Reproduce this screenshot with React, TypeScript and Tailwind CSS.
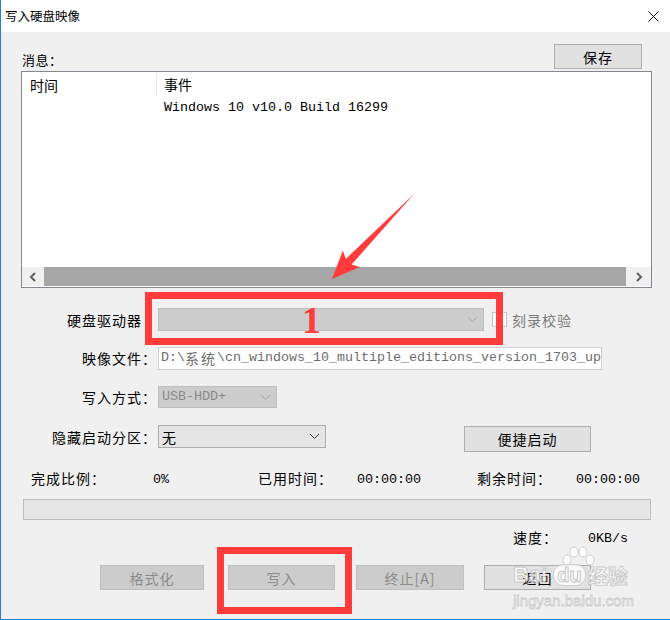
import React from 'react';

const cjk = "font-['Noto_Sans_CJK_SC',sans-serif]";
const mono = "font-['Liberation_Mono','Noto_Sans_CJK_SC',monospace]";

const Chevron: React.FC<{ color: string }> = ({ color }) => (
  <svg width="11" height="7" viewBox="0 0 11 7">
    <path d="M1 1 L5.5 5.5 L10 1" fill="none" stroke={color} strokeWidth="1" />
  </svg>
);

const Btn: React.FC<{ label: string; w: string; disabled?: boolean; className?: string }> = ({
  label,
  w,
  disabled,
  className = '',
}) => (
  <div
    className={`${w} h-[25px] flex items-center justify-center border text-[14px] tracking-[1px] leading-none ${
      disabled ? 'bg-[#cccccc] border-[#bfbfbf] text-[#8a8a8a]' : 'bg-[#e1e1e1] border-[#adadad] text-black'
    } ${className}`}
  >
    {label}
  </div>
);

const App: React.FC = () => {
  return (
    <div className={`relative w-[670px] h-[620px] overflow-hidden bg-[#f0f0f0] border-l border-b border-[#1883d7] ${cjk} text-black`}>
      {/* title bar */}
      <div className="h-[32px] bg-white flex items-center justify-between pl-[4px] pr-[11px]">
        <span className="text-[12.5px] leading-none">写入硬盘映像</span>
        <svg width="11" height="11" viewBox="0 0 11 11">
          <path d="M0.5 0.5 L10.5 10.5 M10.5 0.5 L0.5 10.5" stroke="#111" strokeWidth="1" />
        </svg>
      </div>

      {/* messages header */}
      <div className="mt-[13px] flex items-end justify-between pl-[21px] pr-[28px] h-[24px]">
        <span className="text-[13px] leading-[14px] mb-[2px] tracking-[0.5px]">消息：</span>
        <Btn label="保存" w="w-[88px]" className="h-[24px]" />
      </div>

      {/* message list */}
      <div className="mt-[2px] ml-[20px] w-[631px] h-[217px] border border-[#828790] bg-white flex flex-col">
        <div className="h-[24px] flex text-[14px] leading-none">
          <div className="w-[135px] h-[23px] mt-[1px] pl-[8px] flex items-center border-r border-[#e5e5e5]">时间</div>
          <div className="pl-[7px] flex items-center">事件</div>
        </div>
        <div className={`h-[24px] pl-[142px] flex items-center text-[13.33px] leading-none ${mono}`}>
          Windows 10 v10.0 Build 16299
        </div>
        <div className="flex-1" />
        <div className="h-[19px] mb-[1px] flex">
          <div className="w-[22px] bg-[#f0f0f0] flex items-center justify-center">
            <svg width="8" height="10" viewBox="0 0 8 10">
              <path d="M6 1 L2 5 L6 9" fill="none" stroke="#606060" strokeWidth="2" />
            </svg>
          </div>
          <div className="flex-1 bg-[#a6a6a6]" />
          <div className="w-[25px] bg-[#f0f0f0] flex items-center justify-center">
            <svg width="8" height="10" viewBox="0 0 8 10">
              <path d="M2 1 L6 5 L2 9" fill="none" stroke="#606060" strokeWidth="2" />
            </svg>
          </div>
        </div>
      </div>

      {/* drive row */}
      <div className="mt-[20px] h-[23px] flex items-center text-[14px] tracking-[1px] leading-none">
        <div className="w-[157px] pr-[16px] text-right">硬盘驱动器</div>
        <div className="w-[326px] h-[23px] bg-[#cccccc] border border-[#bfbfbf] flex items-center justify-end pr-[5px]">
          <Chevron color="#a8a8a8" />
        </div>
        <div className="ml-[8px] w-[15px] h-[15px] bg-white border border-[#c4c4c4]" />
        <span className="ml-[5px] text-[#7a7a7a]">刻录校验</span>
      </div>

      {/* image file row */}
      <div className="mt-[16px] h-[22px] flex items-center text-[14px] tracking-[1px] leading-none">
        <div className="w-[157px] pr-[1px] text-right">映像文件：</div>
        <div
          className={`w-[444px] h-[23px] bg-white border border-[#cfcfcf] pl-[2px] flex items-center overflow-hidden whitespace-nowrap tracking-normal text-[13.33px] text-[#6d6d6d] ${mono}`}
        >
          D:\<span className={`${cjk} text-[14px] tracking-[2px]`}>系统</span>\cn_windows_10_multiple_editions_version_1703_up
        </div>
      </div>

      {/* write mode row */}
      <div className="mt-[17px] h-[22px] flex items-center text-[14px] tracking-[1px] leading-none">
        <div className="w-[157px] pr-[1px] text-right">写入方式：</div>
        <div
          className={`w-[119px] h-[22px] bg-[#cccccc] border border-[#bfbfbf] flex items-center justify-between pl-[3px] pr-[5px] tracking-normal text-[13.33px] text-[#8a8a8a] ${mono}`}
        >
          <span>USB-HDD+</span>
          <Chevron color="#a8a8a8" />
        </div>
      </div>

      {/* hidden partition row */}
      <div className="mt-[17px] flex items-start text-[14px] tracking-[1px] leading-none">
        <div className="w-[157px] h-[23px] pr-[1px] flex items-center justify-end">隐藏启动分区：</div>
        <div className="w-[168px] h-[23px] bg-[#e5e5e5] border border-[#acacac] flex items-center justify-between pl-[3px] pr-[5px]">
          <span>无</span>
          <Chevron color="#333333" />
        </div>
        <Btn label="便捷启动" w="w-[127px]" className="ml-[138px] mt-[1px] h-[26px]" />
      </div>

      {/* status row */}
      <div className="mt-[16px] h-[20px] pl-[30px] flex items-center text-[14px] leading-none">
        <span className="w-[122px] tracking-[1px]">完成比例：</span>
        <span className={`w-[105px] mt-[4px] text-[13.33px] ${mono}`}>0%</span>
        <span className="w-[99px] tracking-[1px]">已用时间：</span>
        <span className={`w-[120px] mt-[4px] text-[13.33px] ${mono}`}>00:00:00</span>
        <span className="w-[99px] tracking-[1px]">剩余时间：</span>
        <span className={`mt-[4px] text-[13.33px] ${mono}`}>00:00:00</span>
      </div>

      {/* progress */}
      <div className="mt-[11px] ml-[22px] w-[628px] h-[21px] bg-[#e6e6e6] border border-[#bcbcbc]" />

      {/* speed */}
      <div className="mt-[7px] h-[20px] pl-[512px] flex items-center text-[14px] leading-none">
        <span className="w-[75px] tracking-[1px]">速度：</span>
        <span className={`mt-[4px] text-[13.33px] ${mono}`}>0KB/s</span>
      </div>

      {/* buttons */}
      <div className="mt-[18px] pl-[99px] flex">
        <Btn label="格式化" w="w-[104px]" disabled />
        <Btn label="写入" w="w-[107px]" disabled className="ml-[24px]" />
        <Btn label="终止[A]" w="w-[108px]" disabled className="ml-[21px]" />
        <Btn label="返回" w="w-[107px]" className="ml-[20px]" />
      </div>

      {/* annotations */}
      <div className="absolute inset-0 pointer-events-none">
        <div className="absolute left-[144px] top-[292px] w-[358px] h-[53px] border-[7px] border-[#ff3b3b]" />
        <div className="absolute left-[216px] top-[547px] w-[135px] h-[67px] border-[7px] border-[#ff3b3b]" />
        <span className="absolute left-[301px] top-[301px] text-[38px] font-bold leading-none text-[#ff3b3b] font-['Liberation_Serif',serif]">
          1
        </span>
        <svg className="absolute left-[-1px] top-0" width="670" height="620" viewBox="0 0 670 620">
          <polygon
            points="332,279 360,267 351.6,264.5 414,194 345.8,258.9 342.8,250.5"
            fill="#ff3b3b"
          />
        </svg>

        {/* watermark */}
        <div className="absolute left-[512px] top-[546px] w-[125px] h-[68px] opacity-80">
          <svg className="absolute left-[46px] top-[0px]" width="38" height="30" viewBox="0 0 38 30">
            <g fill="#ffffff" stroke="#c9c9c9" strokeWidth="1">
              <ellipse cx="8" cy="14" rx="4" ry="5" />
              <ellipse cx="15" cy="6" rx="4" ry="5" />
              <ellipse cx="24" cy="6" rx="4" ry="5" />
              <ellipse cx="31" cy="14" rx="4" ry="5" />
            </g>
          </svg>
          <div className="absolute left-[0px] top-[18px] flex items-end font-['Liberation_Sans',sans-serif] font-bold text-[22px] leading-none text-white [-webkit-text-stroke:1px_#c4c4c4]">
            <span>Bai</span>
            <span className="ml-[6px] px-[3px] rounded-[10px] bg-white border border-[#c9c9c9] text-[20px] text-white">du</span>
            <span className={`ml-[2px] text-[20px] ${cjk}`}>经验</span>
          </div>
          <div className="absolute left-[0px] top-[47px] font-['Liberation_Sans',sans-serif] text-[15px] leading-none text-white [-webkit-text-stroke:0.8px_#c4c4c4]">
            jingyan.baidu.com
          </div>
        </div>
      </div>
    </div>
  );
};

export default App;
